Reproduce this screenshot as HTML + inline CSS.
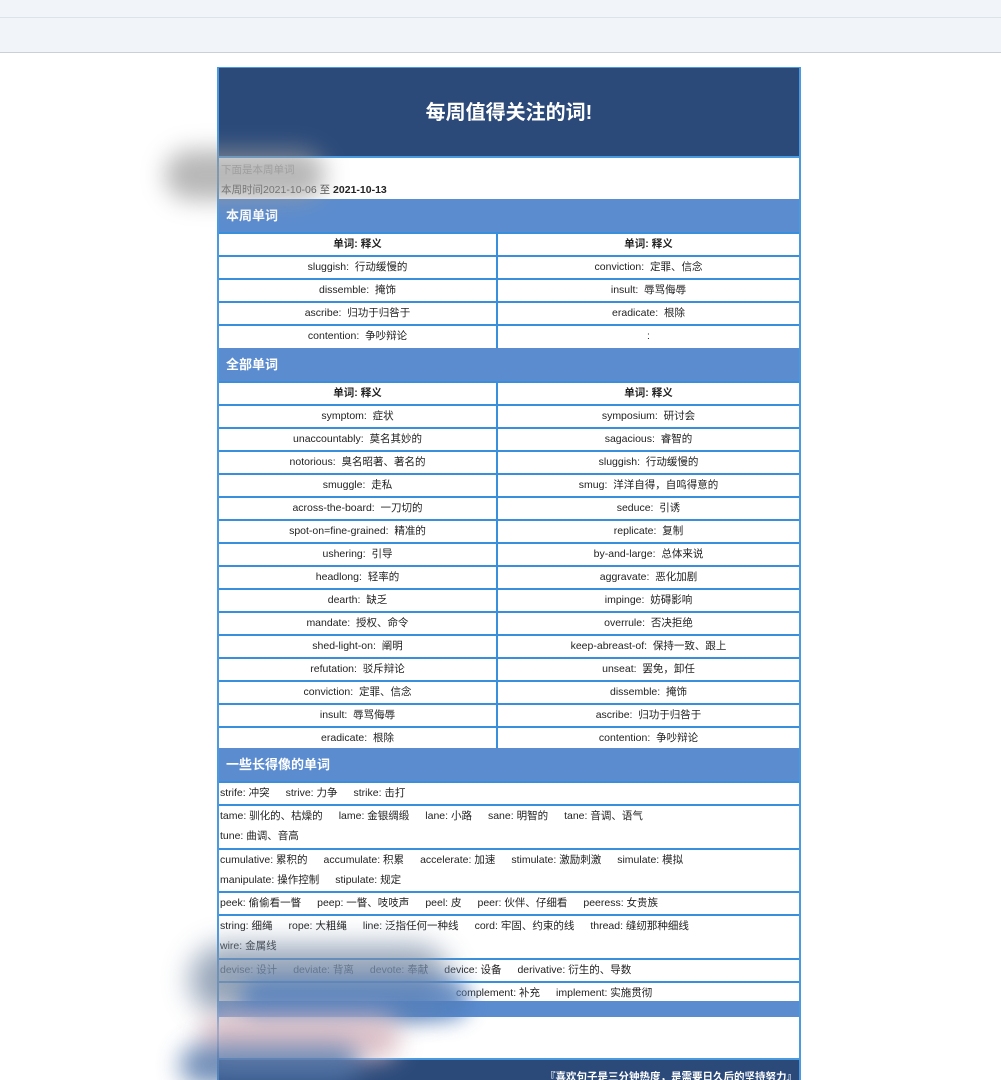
<!DOCTYPE html>
<html style="height:1080px;overflow:hidden"><head><meta charset="utf-8">
<style>
*{margin:0;padding:0;box-sizing:border-box}
body{width:1001px;height:1080px;background:#fff;position:relative;overflow:hidden;font-family:"Liberation Sans","Noto Sans CJK SC",sans-serif;font-size:10.5px;color:#222}
.topbar{position:absolute;left:0;top:0;width:1001px;height:53px;background:#f1f4f8;border-bottom:1px solid #c9d0da}
.topbar:after{content:"";position:absolute;left:0;top:17px;width:100%;height:1px;background:#dde2e8}
.wrap{position:absolute;left:217px;top:67px;width:584px;height:1013px;overflow:hidden;border-left:2px solid #4a9ae0;border-right:2px solid #4a9ae0;border-top:1px solid #4a9ae0}
.hdr{position:absolute;left:0;top:0;width:100%;height:88px;background:#2b4a7a;color:#fff;font-size:20px;font-weight:bold;text-align:center;line-height:90px}
.info{position:absolute;left:0;top:88px;width:100%;height:43px;border-top:2px solid #4a9ae0}
.sec{position:absolute;left:0;width:100%;height:33px;background:#5b8ccf;color:#fff;font-weight:bold;font-size:13px;line-height:33px;padding-left:7px}
.row{position:absolute;left:0;width:100%;border-top:2px solid #3a8fdc;display:flex}
.row div{flex:1;text-align:center;line-height:21px}
.row div:first-child{border-right:2px solid #3a8fdc;flex:0 0 279px}
.lr{position:absolute;left:0;width:100%;border-top:2px solid #3a8fdc;padding-left:1px;line-height:20px}
.lr span{margin-right:16px}
.b{font-weight:bold}
</style></head><body>
<div class="topbar"></div>
<div class="wrap">
<div class="hdr">每周值得关注的词!</div>
<div class="info"><div style="position:absolute;left:2px;top:4px;color:#aaa">下面是本周单词</div><div style="position:absolute;left:2px;top:24px;color:#444;font-size:10.5px">本周时间2021-10-06 至 <b style="color:#222">2021-10-13</b></div></div>
<div class="sec" style="top:131px">本周单词</div>
<div class="row b" style="top:164px;height:23px"><div>单词: 释义</div><div>单词: 释义</div></div>
<div class="row" style="top:187px;height:23px"><div>sluggish:&nbsp; 行动缓慢的</div><div>conviction:&nbsp; 定罪、信念</div></div>
<div class="row" style="top:210px;height:23px"><div>dissemble:&nbsp; 掩饰</div><div>insult:&nbsp; 辱骂侮辱</div></div>
<div class="row" style="top:233px;height:23px"><div>ascribe:&nbsp; 归功于归咎于</div><div>eradicate:&nbsp; 根除</div></div>
<div class="row" style="top:256px;height:24px"><div>contention:&nbsp; 争吵辩论</div><div>:</div></div>
<div class="sec" style="top:280px">全部单词</div>
<div class="row b" style="top:313px;height:23px"><div>单词: 释义</div><div>单词: 释义</div></div>
<div class="row" style="top:336px;height:23px"><div>symptom:&nbsp; 症状</div><div>symposium:&nbsp; 研讨会</div></div>
<div class="row" style="top:359px;height:23px"><div>unaccountably:&nbsp; 莫名其妙的</div><div>sagacious:&nbsp; 睿智的</div></div>
<div class="row" style="top:382px;height:23px"><div>notorious:&nbsp; 臭名昭著、著名的</div><div>sluggish:&nbsp; 行动缓慢的</div></div>
<div class="row" style="top:405px;height:23px"><div>smuggle:&nbsp; 走私</div><div>smug:&nbsp; 洋洋自得，自鸣得意的</div></div>
<div class="row" style="top:428px;height:23px"><div>across-the-board:&nbsp; 一刀切的</div><div>seduce:&nbsp; 引诱</div></div>
<div class="row" style="top:451px;height:23px"><div>spot-on=fine-grained:&nbsp; 精准的</div><div>replicate:&nbsp; 复制</div></div>
<div class="row" style="top:474px;height:23px"><div>ushering:&nbsp; 引导</div><div>by-and-large:&nbsp; 总体来说</div></div>
<div class="row" style="top:497px;height:23px"><div>headlong:&nbsp; 轻率的</div><div>aggravate:&nbsp; 恶化加剧</div></div>
<div class="row" style="top:520px;height:23px"><div>dearth:&nbsp; 缺乏</div><div>impinge:&nbsp; 妨碍影响</div></div>
<div class="row" style="top:543px;height:23px"><div>mandate:&nbsp; 授权、命令</div><div>overrule:&nbsp; 否决拒绝</div></div>
<div class="row" style="top:566px;height:23px"><div>shed-light-on:&nbsp; 阐明</div><div>keep-abreast-of:&nbsp; 保持一致、跟上</div></div>
<div class="row" style="top:589px;height:23px"><div>refutation:&nbsp; 驳斥辩论</div><div>unseat:&nbsp; 罢免，卸任</div></div>
<div class="row" style="top:612px;height:23px"><div>conviction:&nbsp; 定罪、信念</div><div>dissemble:&nbsp; 掩饰</div></div>
<div class="row" style="top:635px;height:23px"><div>insult:&nbsp; 辱骂侮辱</div><div>ascribe:&nbsp; 归功于归咎于</div></div>
<div class="row" style="top:658px;height:22px"><div>eradicate:&nbsp; 根除</div><div>contention:&nbsp; 争吵辩论</div></div>
<div class="sec" style="top:680px">一些长得像的单词</div>
<div class="lr" style="top:713px;height:23px"><span>strife: 冲突</span><span>strive: 力争</span><span>strike: 击打</span></div>
<div class="lr" style="top:736px;height:44px"><span>tame: 驯化的、枯燥的</span><span>lame: 金银绸缎</span><span>lane: 小路</span><span>sane: 明智的</span><span>tane: 音调、语气</span><br><span>tune: 曲调、音高</span></div>
<div class="lr" style="top:780px;height:43px"><span>cumulative: 累积的</span><span>accumulate: 积累</span><span>accelerate: 加速</span><span>stimulate: 激励刺激</span><span>simulate: 模拟</span><br><span>manipulate: 操作控制</span><span>stipulate: 规定</span></div>
<div class="lr" style="top:823px;height:23px"><span>peek: 偷偷看一瞥</span><span>peep: 一瞥、吱吱声</span><span>peel: 皮</span><span>peer: 伙伴、仔细看</span><span>peeress: 女贵族</span></div>
<div class="lr" style="top:846px;height:44px"><span>string: 细绳</span><span>rope: 大粗绳</span><span>line: 泛指任何一种线</span><span>cord: 牢固、约束的线</span><span>thread: 缝纫那种细线</span><br><span>wire: 金属线</span></div>
<div class="lr" style="top:890px;height:23px"><span>devise: 设计</span><span>deviate: 背离</span><span>devote: 奉献</span><span>device: 设备</span><span>derivative: 衍生的、导数</span></div>
<div class="lr" style="top:913px;height:20px;padding-left:237px"><span>complement: 补充</span><span>implement: 实施贯彻</span></div>
<div style="position:absolute;left:0;top:933px;width:100%;height:16px;background:#5b8ccf"></div>
<div style="position:absolute;left:0;top:990px;width:100%;height:30px;background:#2b4a7a;border-top:2px solid #4a9ae0;color:#fff;font-weight:bold;text-align:right;padding-right:2px;line-height:34px">『喜欢句子是三分钟热度，是需要日久后的坚持努力』</div>
</div>
<div style="position:absolute;left:165px;top:150px;width:160px;height:50px;background:#999;filter:blur(12px);opacity:.7;border-radius:30px"></div>
<div style="position:absolute;left:190px;top:945px;width:260px;height:70px;background:#7d8fa8;filter:blur(14px);opacity:.8;border-radius:40px"></div>
<div style="position:absolute;left:240px;top:980px;width:230px;height:40px;background:#4f7dbd;filter:blur(10px);opacity:.8;border-radius:30px"></div>
<div style="position:absolute;left:200px;top:1015px;width:200px;height:45px;background:#d8b8c0;filter:blur(12px);opacity:.85;border-radius:30px"></div>
<div style="position:absolute;left:180px;top:1045px;width:180px;height:40px;background:#4f74a8;filter:blur(12px);opacity:.8;border-radius:30px"></div>
</body></html>
